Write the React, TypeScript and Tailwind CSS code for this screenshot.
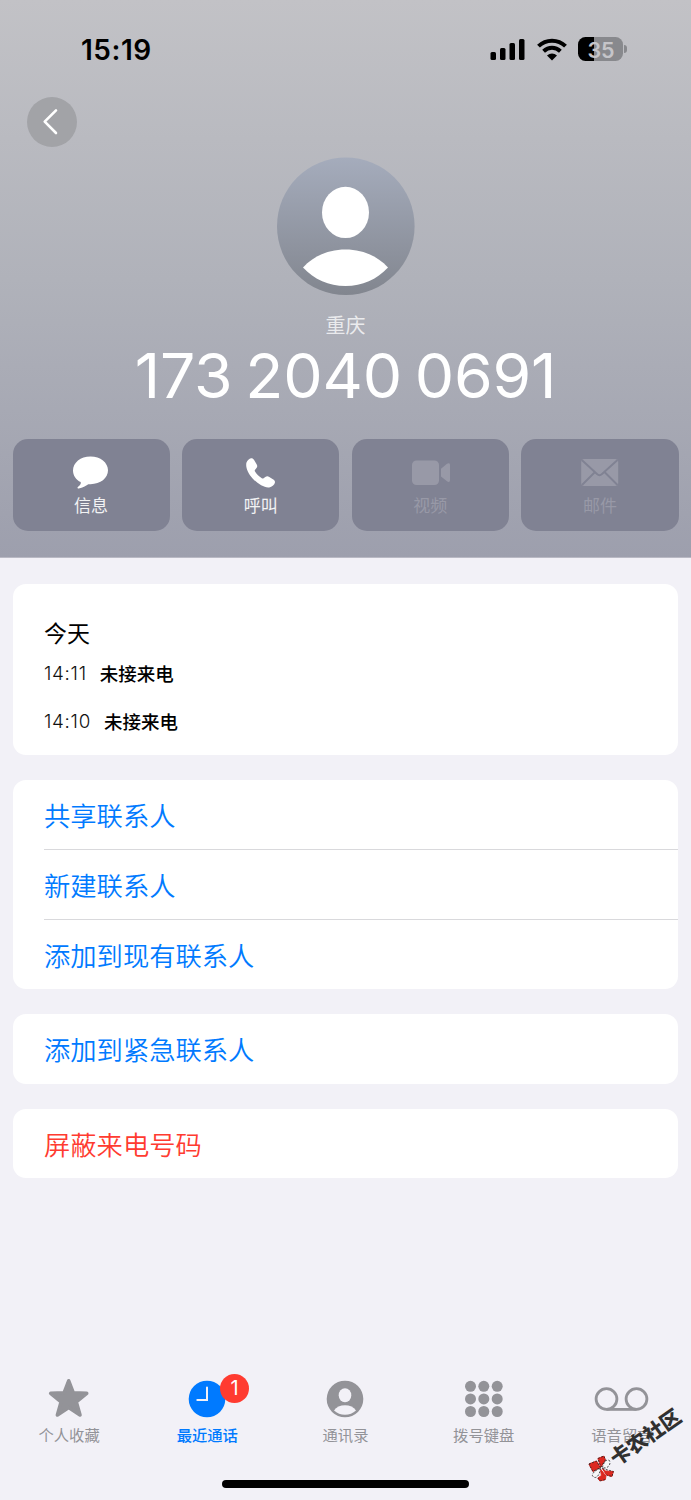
import type { ReactNode } from 'react';

type Action = {
  label: string;
  icon: ReactNode;
  disabled?: boolean;
};

type Tab = {
  label: string;
  icon: ReactNode;
  active?: boolean;
  badge?: number;
};

const ACTIONS: Action[] = [
  { label: '信息', icon: <MessageIcon /> },
  { label: '呼叫', icon: <PhoneIcon /> },
  { label: '视频', icon: <VideoIcon />, disabled: true },
  { label: '邮件', icon: <MailIcon />, disabled: true },
];

const CALLS = [
  { time: '14:11', type: '未接来电' },
  { time: '14:10', type: '未接来电' },
];

const TABS: Tab[] = [
  { label: '个人收藏', icon: <StarIcon /> },
  { label: '最近通话', icon: <ClockIcon />, active: true, badge: 1 },
  { label: '通讯录', icon: <ContactIcon /> },
  { label: '拨号键盘', icon: <KeypadIcon /> },
  { label: '语音留言', icon: <VoicemailIcon /> },
];

export default function App() {
  return (
    <div className="relative flex h-[1500px] w-[691px] flex-col overflow-hidden bg-[#f2f1f7] font-['Inter','Noto_Sans_CJK_SC',sans-serif]">
      <Header />

      <main className="flex flex-1 flex-col gap-[25px] px-[13px] pt-[26px]">
        {/* Call history */}
        <section className="h-[171px] rounded-[13px] bg-white px-[31px] pt-[35px] text-black">
          <h2 className="h-[30px] text-[23px] leading-[30px]">今天</h2>
          <ul className="mt-[14px] space-y-6">
            {CALLS.map((call) => (
              <li key={call.time} className="flex h-6 items-center gap-[13px] text-[18.5px] leading-6">
                <span className="relative -top-px text-[18.8px] font-[350] tracking-[0.7px] text-[#111]">{call.time}</span>
                <span className="relative -top-px font-medium">{call.type}</span>
              </li>
            ))}
          </ul>
        </section>

        <Group rows={['共享联系人', '新建联系人', '添加到现有联系人']} />
        <Group rows={['添加到紧急联系人']} />
        <Group rows={['屏蔽来电号码']} danger />
      </main>

      <TabBar />
      <Watermark />
    </div>
  );
}

function Header() {
  return (
    <header className="flex h-[558px] shrink-0 flex-col border-b border-[#b9b9c4] bg-linear-to-b from-[#c2c2c6] via-[#b0b2ba] via-50% to-[#9d9fad]">
      {/* Status bar */}
      <div className="flex h-[97px] items-start justify-between pr-[64px] pl-[81px]">
        <span className="mt-[35px] text-[28px] leading-[30px] font-semibold tracking-[0.5px] text-black">15:19</span>
        <div className="mt-[37px] flex items-center gap-[11px]">
          <SignalIcon />
          <WifiIcon />
          <Battery />
        </div>
      </div>

      <button className="ml-[27px] flex h-[50px] w-[50px] shrink-0 items-center justify-center rounded-full bg-[#a2a3a7]">
        <svg width="50" height="50" viewBox="0 0 50 50" fill="none">
          <path d="M29 13.3 17.7 24.7 29 36" stroke="white" strokeWidth="2.6" strokeLinecap="round" strokeLinejoin="round" />
        </svg>
      </button>

      <div className="mt-[10px] flex flex-col items-center">
        <Avatar />
        <p className="mt-[19px] h-6 text-[20px] leading-6 text-white/75">重庆</p>
        <h1 className="mt-[5px] h-16 text-[62.5px] leading-[64px] tracking-[-0.2px] whitespace-nowrap text-white [word-spacing:-4.5px]">173 2040 0691</h1>
      </div>

      <div className="mt-8 grid grid-cols-4 gap-[12.5px] px-[12.5px]">
        {ACTIONS.map((action) => (
          <button
            key={action.label}
            className={`flex h-[91.5px] flex-col items-center rounded-[15px] bg-[#808293] pt-[15px] ${action.disabled ? 'text-[#9899a7]' : 'text-white'}`}
          >
            {action.icon}
            <span className={`mt-1 text-[17px] leading-6 ${action.disabled ? '' : 'text-white/90'}`}>{action.label}</span>
          </button>
        ))}
      </div>
    </header>
  );
}

function Group({ rows, danger }: { rows: string[]; danger?: boolean }) {
  return (
    <section className="rounded-[13px] bg-white pl-[31px]">
      {rows.map((row, idx) => (
        <div
          key={row}
          className={`flex items-center pt-[5px] text-[26.3px] leading-[36px] font-[350] ${rows.length > 1 && idx === 0 ? 'h-[69.3px]' : 'h-[69.8px]'} ${idx > 0 ? 'border-t border-[#d9d9dc]' : ''} ${danger ? 'text-[#ff3b30]' : 'text-[#007aff]'}`}
        >
          {row}
        </div>
      ))}
    </section>
  );
}

function TabBar() {
  return (
    <footer className="flex h-[128px] shrink-0 flex-col items-center">
      <nav className="grid w-full grid-cols-5">
        {TABS.map((tab) => (
          <div key={tab.label} className={`flex flex-col items-center ${tab.active ? 'text-[#007aff]' : 'text-[#939398]'}`}>
            <div className="relative flex h-[54px] items-center justify-center">
              {tab.icon}
              {tab.badge && (
                <span className="absolute top-[2px] left-[40px] flex h-[28.5px] w-[28.5px] items-center justify-center rounded-full bg-[#ff3b30] text-[20px] leading-none text-white">
                  {tab.badge}
                </span>
              )}
            </div>
            <span className={`text-[15.3px] leading-5 ${tab.active ? 'font-medium' : ''}`}>{tab.label}</span>
          </div>
        ))}
      </nav>
      <div className="mt-[34px] h-[8px] w-[247px] rounded-full bg-black" />
    </footer>
  );
}

function Watermark() {
  return (
    <div className="absolute top-[1431px] left-[581px] flex h-7 w-[108px] rotate-[-35deg] items-center justify-center">
      <svg width="26" height="26" viewBox="0 0 26 26" className="shrink-0 rotate-[35deg]">
        <path
          d="M.5 8.500 8 5.500 12 12 4.500 16zM9.500 3 15.500.500 17 4.500 12.500 11.500zM14 13 17 15.500 25 16 23.500 21 18 19.500zM12 13.500 17.500 20.500 17 24 11.500 25.500 9.500 22.500 13 20z"
          fill="#dc2820"
          stroke="#dc2820"
          strokeWidth="1"
        />
        <path d="M14 12c1-5 4-9 7-7 2 4-2 9-7 7zM12 13c-4 1-8 4-8 7 2 4 7 2 8-7z" fill="#f7f7f7" />
        <path
          d="M.5 8.500 8 5.500 12 12 4.500 16zM9.500 3 15.500.500 17 4.500 12.500 11.500zM14 12c1-5 4-9 7-7 2 4-2 9-7 7zM12 13c-4 1-8 4-8 7 2 4 7 2 8-7zM14 13 25 16 23.500 21 18 19.500M9.500 22.500 11.500 25.500 17 24"
          fill="none"
          stroke="#222"
          strokeWidth=".8"
          strokeDasharray="2 1.500"
        />
      </svg>
      <span className="text-[20.3px] leading-6 font-black whitespace-nowrap text-[#303030]">卡农社区</span>
    </div>
  );
}

function Avatar() {
  return (
    <svg width="138" height="138" viewBox="0 0 138 138">
      <defs>
        <linearGradient id="avatar" x1="0" y1="0" x2="0" y2="1">
          <stop offset="0" stopColor="#a5acbc" />
          <stop offset="1" stopColor="#82868f" />
        </linearGradient>
      </defs>
      <circle cx="68.800" cy="69.200" r="68.800" fill="url(#avatar)" />
      <ellipse cx="68.500" cy="55.400" rx="23.5" ry="25.7" fill="white" />
      <path d="M26 110.500C36.500 99 51.500 92.500 68.500 92.500s32 6.500 42.500 18C99.500 122.500 85.500 129 68.500 129S37.500 122.500 26 110.500z" fill="white" />
    </svg>
  );
}

function SignalIcon() {
  return (
    <svg width="36" height="24" viewBox="0 0 36 24">
      <rect x="0.500" y="15" width="5.500" height="8" rx="1.500" />
      <rect x="10" y="11" width="5.500" height="12" rx="1.500" />
      <rect x="19.500" y="6" width="5.500" height="17" rx="1.500" />
      <rect x="29" y="2" width="5.500" height="21" rx="1.500" />
    </svg>
  );
}

function WifiIcon() {
  return (
    <svg width="30" height="24" viewBox="0 0 30 24" fill="none" stroke="black" strokeWidth="4">
      <path d="M1.500 9.200C9 1.800 21 1.800 28.500 9.200" />
      <path d="M6.600 14.300C11.500 9.700 18.500 9.700 23.400 14.300" />
      <path d="M10 18.600C13 15.800 17 15.800 20 18.600L15 23.500z" fill="black" stroke="none" />
    </svg>
  );
}

function Battery() {
  return (
    <div className="flex items-center">
      <div className="flex h-6 w-[45px] items-center justify-center rounded-[7.5px] bg-linear-to-r from-black from-35% to-[#88898d] to-35%">
        <span className="pt-[1px] pl-[1px] text-[21.5px] leading-6 font-semibold text-[#c5c5c9]">35</span>
      </div>
      <div className="ml-[1px] h-[8px] w-[3px] rounded-r-full bg-[#88898d]" />
    </div>
  );
}

function MessageIcon() {
  return (
    <svg width="38" height="36" viewBox="0 0 38 36" fill="currentColor">
      <path d="M18.500 2.400C8.500 2.400 1 8.600 1 16.400c0 5 3 9.200 7.700 11.700.6 1.500-.6 3.300-2.900 4.800-.7.900-.1 1.700 1 1.600 4-.4 6.900-2.500 9.500-4.200.7-.2 1.400-.1 2.200-.1 10 0 17.500-6.100 17.500-13.900S28.500 2.400 18.500 2.400z" />
    </svg>
  );
}

function PhoneIcon() {
  return (
    <svg width="38" height="36" viewBox="0 0 38 36" fill="currentColor">
      <path d="M4.500 8.600C5.300 6.500 7.300 4.600 9 4.300c1.200-.2 2.200.4 3.100 1.700l2.500 4.200c1 1.600.8 2.800-.3 4.100l-1.200 1.400c-.5.600-.5 1.100-.1 1.800 1.700 2.700 4 5 6.800 6.700.7.500 1.200.5 1.800 0l1.700-1.200c1.300-1 2.500-1.100 4-.1l4 2.600c1.400.9 1.900 2 1.600 3.200-.5 2-2.700 4-4.900 4.500-5 1.200-12-3-17.400-8.800C6.100 19.300 3.200 13 4.500 8.600z" />
    </svg>
  );
}

function VideoIcon() {
  return (
    <svg width="40" height="36" viewBox="0 0 40 36" fill="currentColor">
      <rect x="2" y="6.500" width="27" height="24.500" rx="4.500" />
      <path d="M31 14.700 37 9.800c1.500-1.100 3-.8 3 1v15.500c0 1.800-1.500 2.100-3 1L31 22.500z" />
    </svg>
  );
}

function MailIcon() {
  return (
    <svg width="38" height="36" viewBox="0 0 38 36">
      <rect x="0.200" y="5" width="37" height="27" rx="3" fill="currentColor" />
      <path d="M.8 6 16 20c1.600 1.500 3.400 1.500 5 0L36.500 6M1 31 13.500 18.500M36.500 31 24 18.500" fill="none" stroke="#808293" strokeWidth="1.900" />
    </svg>
  );
}

function StarIcon() {
  return (
    <svg width="42" height="42" viewBox="0 0 42 42">
      <path d="M20.700 2.800 25.300 14.900 38.700 15.400 28.300 23.900 32 36.900 20.700 29.400 9.400 36.900l3.700-13L2.700 15.400l13.400-.5z" fill="currentColor" stroke="currentColor" strokeWidth="3.600" strokeLinejoin="round" />
    </svg>
  );
}

function ClockIcon() {
  return (
    <svg width="54" height="38" viewBox="0 0 54 38">
      <circle cx="27" cy="19" r="18.300" fill="currentColor" />
      <path d="M27 7.500V20H17.300" fill="none" stroke="#f2f1f7" strokeWidth="2" strokeLinecap="round" />
    </svg>
  );
}

function ContactIcon() {
  return (
    <svg width="38" height="38" viewBox="0 0 38 38">
      <circle cx="19" cy="19" r="18.300" fill="currentColor" />
      <ellipse cx="19" cy="15.300" rx="6.300" ry="7" fill="#f2f1f7" />
      <path d="M8 30.500c2.200-3.400 6.300-5.300 11-5.300s8.800 1.900 11 5.300c-3 2.700-6.800 4.300-11 4.300s-8-1.600-11-4.300z" fill="#f2f1f7" />
    </svg>
  );
}

function KeypadIcon() {
  return (
    <svg width="38" height="38" viewBox="0 0 38 38" fill="currentColor">
      {[6, 18.6, 31.2].map((cy) => [5.5, 18.8, 32.2].map((cx) => <circle key={`${cx}-${cy}`} cx={cx} cy={cy + 0.300} r="5.500" />))}
    </svg>
  );
}

function VoicemailIcon() {
  return (
    <svg width="56" height="38" viewBox="0 0 56 38" fill="none" stroke="currentColor" strokeWidth="2.800">
      <circle cx="12.500" cy="19" r="10.400" />
      <circle cx="42.500" cy="19" r="10.400" />
      <path d="M12.500 29.400h30" />
    </svg>
  );
}
